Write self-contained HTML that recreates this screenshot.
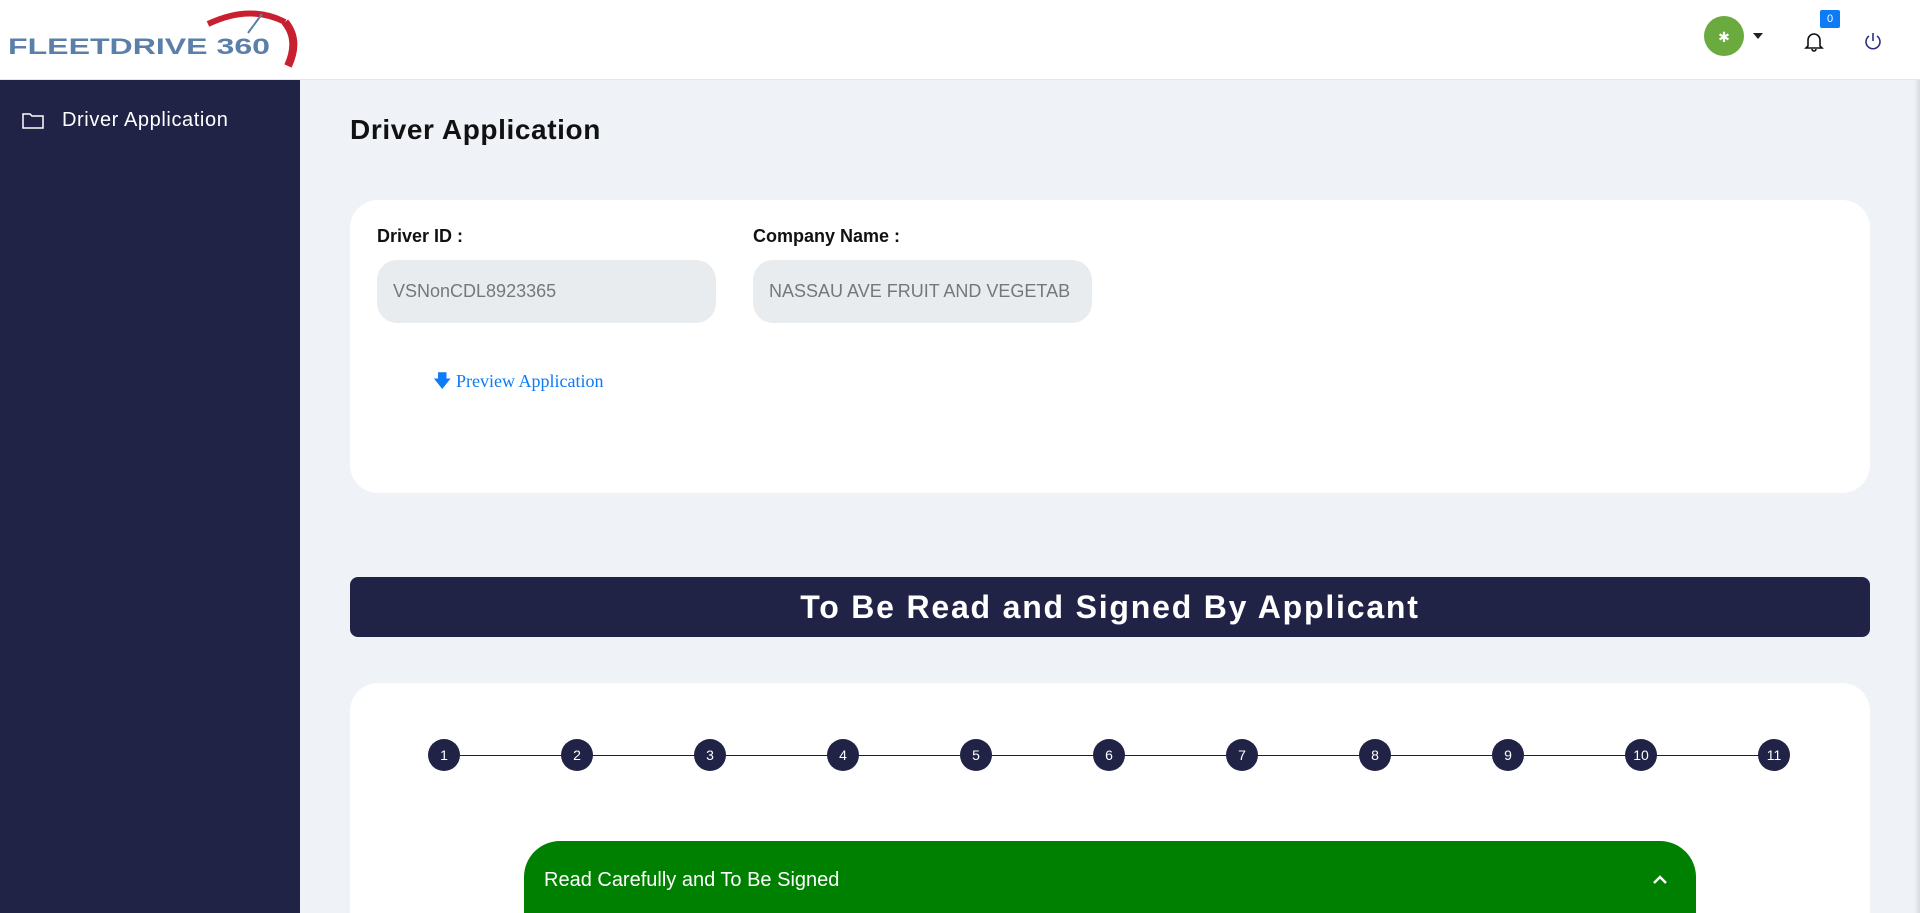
<!DOCTYPE html>
<html style="width:1920px;height:913px;overflow:hidden"><head><meta charset="utf-8"><style>
*{margin:0;padding:0;box-sizing:border-box}
body{width:1920px;height:913px;overflow:hidden;background:#eff2f6;font-family:"Liberation Sans",sans-serif;position:relative}
.hdr{position:absolute;left:0;top:0;width:1920px;height:80px;background:#fff;border-bottom:1px solid #e3e6ea}
.side{position:absolute;left:0;top:80px;width:300px;height:833px;background:#212346}
.abs{position:absolute}
.card{position:absolute;background:#fff;border-radius:28px}
.lbl{position:absolute;font-size:18px;font-weight:bold;color:#111}
.inp{position:absolute;background:#e9ecef;border-radius:20px;height:63px;width:339px;font-size:18px;color:#777;padding-left:16px;line-height:63px;white-space:nowrap;overflow:hidden}
.step{position:absolute;top:739px;width:32px;height:32px;border-radius:50%;background:#212346;color:#fff;font-size:14px;text-align:center;line-height:33px}
.ln{position:absolute;top:755px;height:1px;background:#222}
</style></head><body>
<div class="hdr">
 <svg class="abs" style="left:0;top:0" width="300" height="80">
  <text x="8" y="54" font-family="Liberation Sans" font-weight="bold" font-size="22" fill="#5a7fa8" textLength="262" lengthAdjust="spacingAndGlyphs">FLEETDRIVE 360</text>
  <path d="M208 24 Q250 4 285 22" stroke="#c8202f" stroke-width="6" fill="none"/>
  <path d="M285 22 Q300 40 288 66" stroke="#c8202f" stroke-width="8" fill="none"/>
  <line x1="248" y1="33" x2="262" y2="14" stroke="#5a7fa8" stroke-width="2"/>
 </svg>
 <div class="abs" style="left:1704px;top:16px;width:40px;height:40px;border-radius:50%;background:#6aaa3e;color:#fff;text-align:center;line-height:42px;font-size:14px">✱</div>
 <div class="abs" style="left:1753px;top:33px;border-left:5px solid transparent;border-right:5px solid transparent;border-top:6px solid #222"></div>
 <svg class="abs" style="left:1803px;top:30px" width="22" height="22" viewBox="0 0 22 22"><path d="M5 16 V10 a6 6 0 0 1 12 0 V16 L19 18 H3 Z M9 19 a2 2 0 0 0 4 0" fill="none" stroke="#111" stroke-width="1.6"/></svg>
 <div class="abs" style="left:1820px;top:10px;width:20px;height:18px;background:#0d7bf5;border-radius:2px;color:#fff;font-size:11px;text-align:center;line-height:18px">0</div>
 <svg class="abs" style="left:1862px;top:30px" width="22" height="22" viewBox="0 0 22 22"><path d="M7 6 A7 7 0 1 0 15 6" fill="none" stroke="#2d2f7f" stroke-width="1.6"/><line x1="11" y1="3" x2="11" y2="11" stroke="#2d2f7f" stroke-width="1.6"/></svg>
</div>
<div class="abs" style="right:0;top:80px;width:6px;height:833px;background:linear-gradient(90deg,#eff2f6,#d8dadd)"></div>
<div class="side">
 <svg class="abs" style="left:22px;top:32px" width="22" height="18" viewBox="0 0 22 18"><path d="M1 2 H8 L10 4 H21 V16 H1 Z" fill="none" stroke="#fff" stroke-width="1.5"/></svg>
 <div class="abs" style="left:62px;top:29px;color:#fff;font-size:20px;letter-spacing:0.6px">Driver Application</div>
</div>
<div class="abs" style="left:350px;top:114px;font-size:28px;font-weight:bold;color:#111;letter-spacing:0.6px">Driver Application</div>
<div class="card" style="left:350px;top:200px;width:1520px;height:293px"></div>
<div class="lbl" style="left:377px;top:226px">Driver ID :</div>
<div class="lbl" style="left:753px;top:226px">Company Name :</div>
<div class="inp" style="left:377px;top:260px">VSNonCDL8923365</div>
<div class="inp" style="left:753px;top:260px">NASSAU AVE FRUIT AND VEGETAB</div>
<div class="abs" style="left:433px;top:369px;font-family:'Liberation Serif',serif;font-size:18px;color:#0d7bf5">🡇 Preview Application</div>
<div class="abs" style="left:350px;top:577px;width:1520px;height:60px;background:#212346;border-radius:8px;color:#fff;font-size:32px;font-weight:bold;text-align:center;line-height:60px;letter-spacing:1.8px">To Be Read and Signed By Applicant</div>
<div class="card" style="left:350px;top:683px;width:1520px;height:230px;border-radius:28px 28px 0 0"></div>
<div class="ln" style="left:443px;width:1333px"></div>
<div class="step" style="left:428px">1</div><div class="step" style="left:561px">2</div><div class="step" style="left:694px">3</div><div class="step" style="left:827px">4</div><div class="step" style="left:960px">5</div><div class="step" style="left:1093px">6</div><div class="step" style="left:1226px">7</div><div class="step" style="left:1359px">8</div><div class="step" style="left:1492px">9</div><div class="step" style="left:1625px">10</div><div class="step" style="left:1758px">11</div>
<div class="abs" style="left:524px;top:841px;width:1172px;height:72px;background:#008000;border-radius:36px 36px 0 0"></div>
<div class="abs" style="left:544px;top:869px;color:#fff;font-size:20px">Read Carefully and To Be Signed</div>
<svg class="abs" style="left:1651px;top:873px" width="18" height="14" viewBox="0 0 18 14"><path d="M3 10 L9 4 L15 10" fill="none" stroke="#fff" stroke-width="2.5"/></svg>
</body></html>
